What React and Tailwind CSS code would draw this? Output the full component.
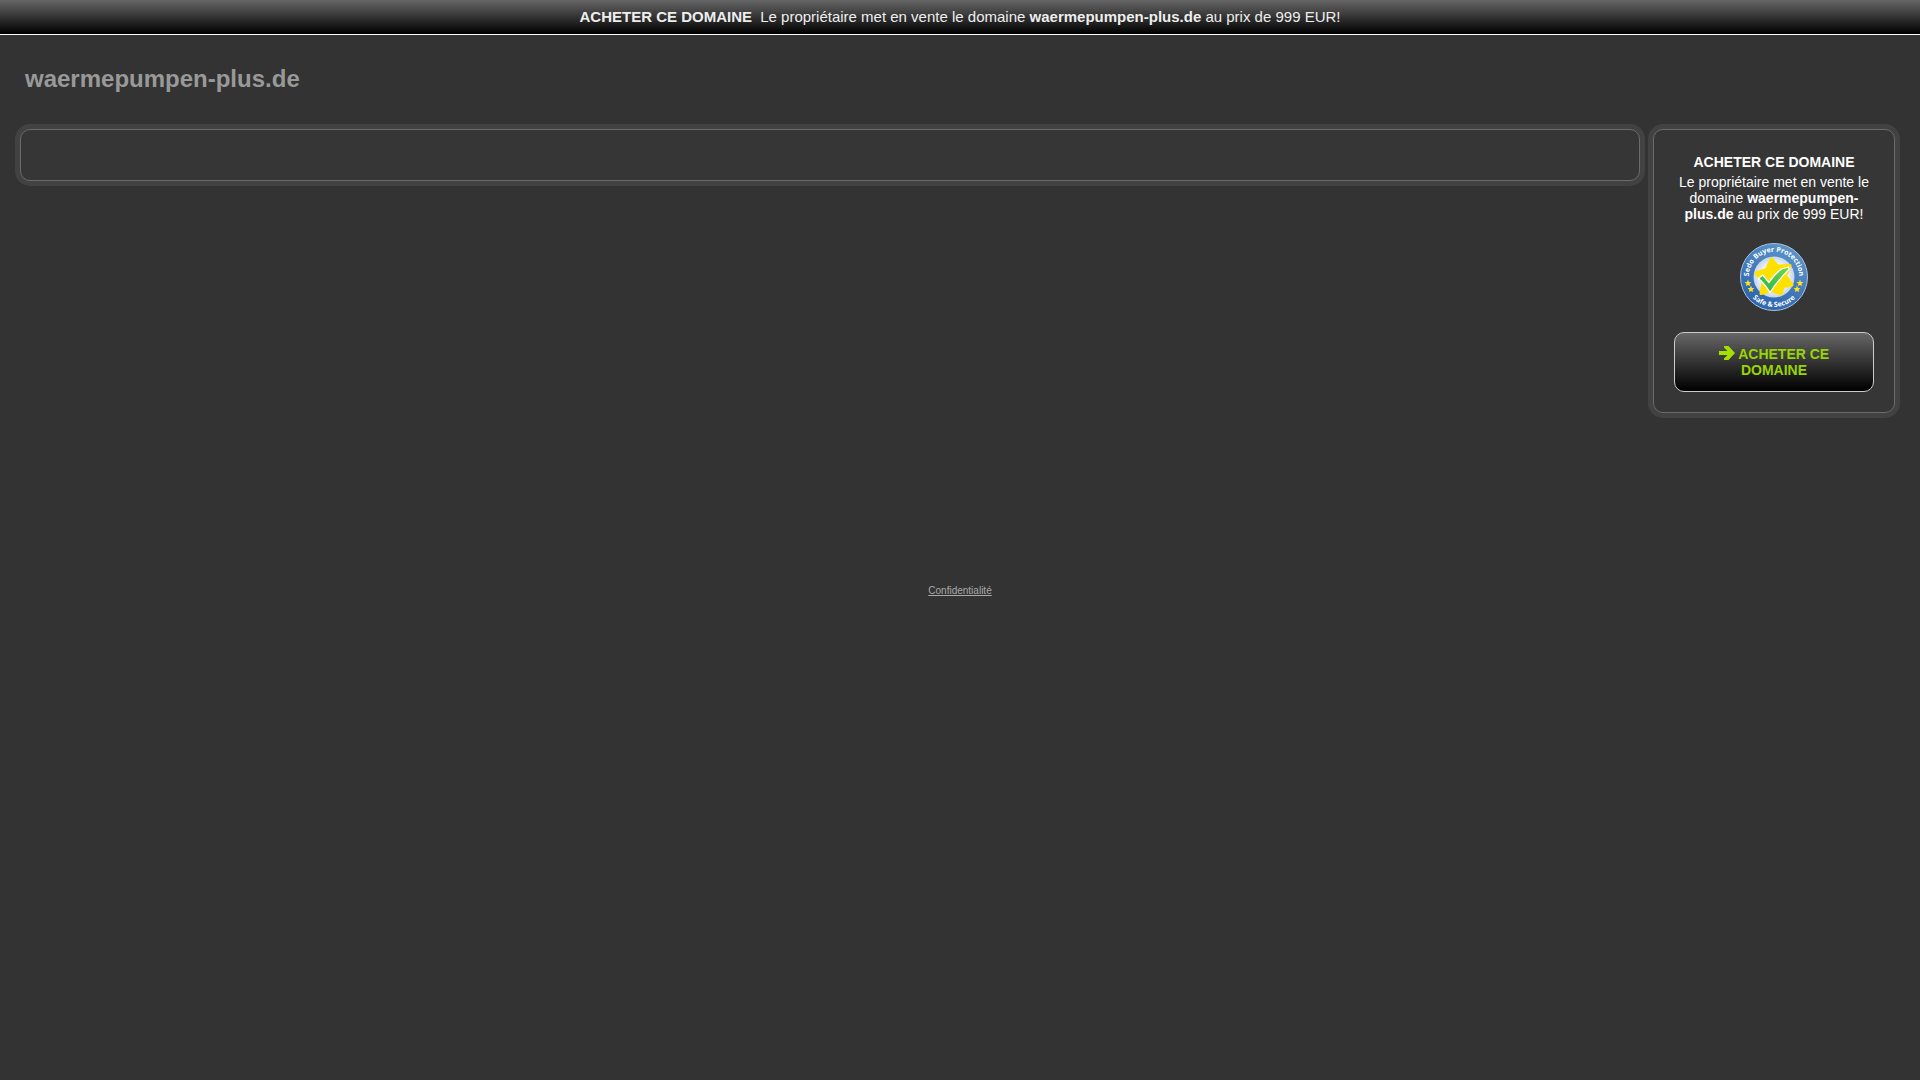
import React from 'react'

const domain = "waermepumpen-plus.de";

const Panel = ({ className = "", children }) => {
  return (
    <div
      className={`rounded-[10px] border border-[#6b6b6b] bg-[#363636] shadow-[0_0_0_5px_#424242] ${className}`}
    >
      {children}
    </div>
  )
}

const Star = ({ x, y }) => (
  <path
    transform={`translate(${x} ${y})`}
    fill="#ffe21a"
    d="M0-3.4 1-1.1 3.4-.9 1.6.8 2.1 3.1 0 1.9-2.1 3.1-1.6.8-3.4-.9-1-1.1Z"
  />
)

const BuyerProtectionSeal = () => {
  return (
    <svg width="70" height="70" viewBox="0 0 70 70" className="mx-auto block" role="img" aria-label="Sedo Buyer Protection">
      <defs>
        <linearGradient id="ring" x1="0.8" y1="0" x2="0.3" y2="1">
          <stop offset="0" stopColor="#5f97cc" />
          <stop offset="1" stopColor="#2a62ad" />
        </linearGradient>
        <radialGradient id="disc">
          <stop offset="0.5" stopColor="#ffffff" />
          <stop offset="1" stopColor="#c3d5ea" />
        </radialGradient>
        <linearGradient id="tick" x1="0" y1="1" x2="1" y2="0">
          <stop offset="0" stopColor="#22b04a" />
          <stop offset="1" stopColor="#6fdc4e" />
        </linearGradient>
        <path id="topArc" d="M10.8 42A25.2 25.2 0 1 1 59.2 42" />
        <path id="bottomArc" d="M6.7 45A30 30 0 0 0 63.3 45" />
      </defs>
      <circle cx="35" cy="35" r="33.5" fill="url(#ring)" stroke="#a9c3df" strokeWidth="1" />
      <circle cx="35" cy="35" r="20.5" fill="url(#disc)" />
      <path
        d="M32.5 17 38.500 24 51 23.500 46.500 34 53 43 44 44.500 42 52 32.500 48.500 22 51.500 24 41 17 31 27.500 27.500Z"
        fill="#ffe100"
        stroke="#ffe100"
        strokeWidth="3"
        strokeLinejoin="round"
      />
      <path
        d="M19.500 36.500 23.500 33 30 40.500Q36 31.500 42.500 27L49.500 25 50 27.500Q40 37 31 50.500 26 42 19.500 36.500Z"
        fill="url(#tick)"
        stroke="#ffffff"
        strokeWidth="1.3"
        strokeLinejoin="round"
      />
      <text fill="#ffffff" fontFamily="Open Sans, sans-serif" fontSize="7" fontWeight="700" textAnchor="middle">
        <textPath href="#topArc" startOffset="50%">Sedo Buyer Protection</textPath>
      </text>
      <text fill="#ffffff" fontFamily="Open Sans, sans-serif" fontSize="7" fontWeight="700" textAnchor="middle">
        <textPath href="#bottomArc" startOffset="50%">Safe &amp; Secure</textPath>
      </text>
      <Star x={9} y={41} />
      <Star x={12} y={47} />
      <Star x={61} y={41} />
      <Star x={58} y={47} />
    </svg>
  )
}

const ArrowIcon = () => (
  <svg width="16" height="14" viewBox="0 0 16 14" className="inline-block align-[-1px]" aria-hidden="true">
    <path d="M0 5h8.500L5 1.500V0h4.500L16 7l-6.500 7H5v-1.500L8.500 9H0Z" fill="#a4e000" />
  </svg>
)

const App = () => {
  return (
    <div className="min-h-screen bg-[#333333] font-['Liberation_Sans',Arial,sans-serif] text-sm leading-4 text-white">
      <a
        href="#buy"
        className="block border-b border-white bg-linear-to-b/srgb from-[#666666] to-black py-2 text-center text-[15px] leading-[18px] text-[#eeeeee]"
      >
        <strong className="mr-1">ACHETER CE DOMAINE</strong>{" "}
        Le propriétaire met en vente le domaine <strong>{domain}</strong> au prix de 999 EUR!
      </a>

      <header className="px-[25px] pt-7">
        <h1 className="text-2xl leading-8 font-bold text-[#999999]">{domain}</h1>
      </header>

      <div className="mt-[34px] flex items-start gap-[13px] pr-[25px] pl-5">
        <main className="flex-1">
          <Panel className="h-[52px]" />
        </main>

        <aside className="w-[242px]">
          <Panel className="px-5 pt-6 pb-5 text-center">
            <h2 className="mb-1 font-bold">ACHETER CE DOMAINE</h2>
            <p>
              Le propriétaire met en vente le domaine <strong>{domain}</strong> au prix de 999 EUR!
            </p>
            <div className="my-5">
              <BuyerProtectionSeal />
            </div>
            <a
              id="buy"
              href="#buy"
              className="block rounded-[10px] border border-[#cccccc] bg-linear-to-b/srgb from-[#666666] to-black px-5 py-[13px] font-bold text-[#99d500]"
            >
              <ArrowIcon /> ACHETER CE DOMAINE
            </a>
          </Panel>
        </aside>
      </div>

      <footer className="mt-[170px] text-center text-[10px] leading-4 text-[#aaaaaa]">
        <a href="#privacy" className="underline">Confidentialité</a>
      </footer>
    </div>
  )
}

export default App
